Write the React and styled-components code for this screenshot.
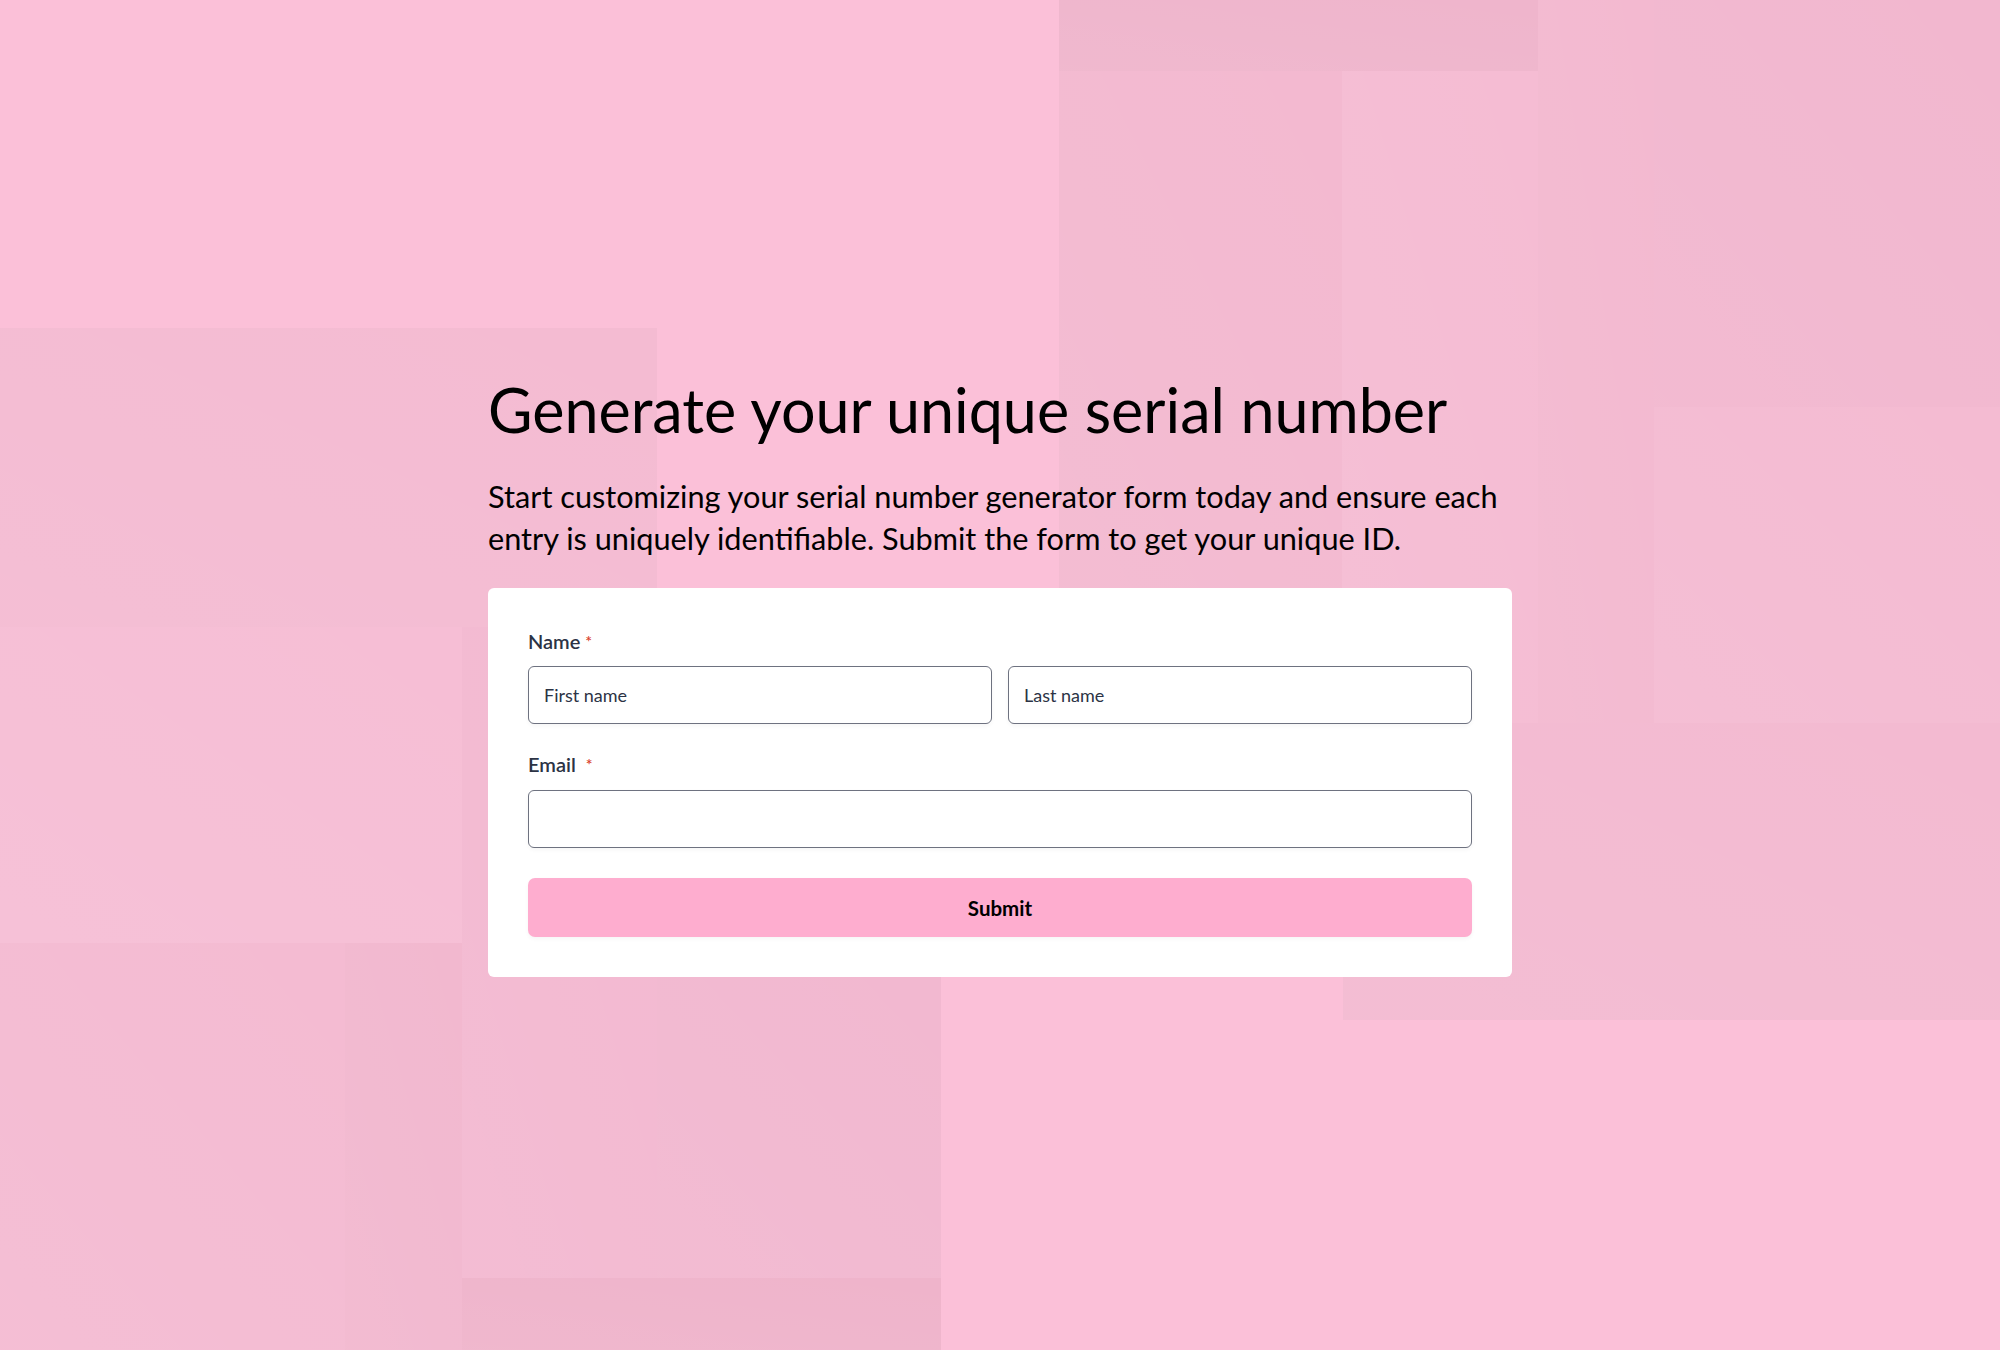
import styled, { createGlobalStyle } from "styled-components";

const GlobalStyle = createGlobalStyle`
  * { box-sizing: border-box; }
  html, body {
    margin: 0;
    padding: 0;
    background: #fbc0d8;
    font-family: Lato, "Open Sans", sans-serif;
  }
`;

// background blocks, [x, y, w, h, fill]
const blocks = [
  [1059, 0, 479, 71, "#efb5cc"],
  [1059, 71, 283, 560, "#f3b9d0"],
  [1342, 71, 196, 652, "#f5bcd3"],
  [1538, 0, 116, 723, "#f3b9d0"],
  [1654, 0, 346, 407, "#f2b7cf"],
  [1654, 407, 346, 316, "#f4bbd2"],
  [1343, 723, 657, 297, "#f3bad1"],
  [0, 328, 657, 299, "#f4bbd2"],
  [0, 627, 462, 316, "#f6bed5"],
  [462, 627, 195, 651, "#f3b9d1"],
  [0, 943, 345, 407, "#f4bbd2"],
  [345, 943, 117, 407, "#f2b8cf"],
  [657, 977, 284, 301, "#f2b8d0"],
  [462, 1278, 479, 72, "#efb4cb"],
];

const Page = () => (
  <Backdrop viewBox="0 0 2000 1350" preserveAspectRatio="none">
    <defs>
      <linearGradient id="shade" x1="0" y1="1" x2="1" y2="0">
        <stop offset="0" stopColor="#fff" stopOpacity="0.05" />
        <stop offset="1" stopColor="#fff" stopOpacity="0" />
      </linearGradient>
    </defs>
    {blocks.map(([x, y, w, h, fill], i) => (
      <g key={i}>
        <rect x={x} y={y} width={w} height={h} fill={fill} />
        <rect x={x} y={y} width={w} height={h} fill="url(#shade)" />
      </g>
    ))}
  </Backdrop>
);

const App = () => {
  return (
    <Wrapper>
      <GlobalStyle />
      <Page />
      <Content>
        <Title>Generate your unique serial number</Title>
        <Lead>
          Start customizing your serial number generator form today and ensure
          each entry is uniquely identifiable. Submit the form to get your
          unique ID.
        </Lead>
        <Card>
          <Field $gap={13}>
            <Label>
              Name<Required>*</Required>
            </Label>
            <Row>
              <Input placeholder="First name" />
              <Input placeholder="Last name" />
            </Row>
          </Field>
          <Field $gap={14}>
            <Label>
              Email <Required>*</Required>
            </Label>
            <Input type="email" />
          </Field>
          <SubmitButton type="button">Submit</SubmitButton>
        </Card>
      </Content>
    </Wrapper>
  );
};

export default App;

const Wrapper = styled.main`
  position: relative;
  min-height: 100vh;
  display: flex;
  align-items: center;
  justify-content: center;
  overflow: hidden;
`;

const Backdrop = styled.svg`
  position: absolute;
  inset: 0;
  width: 100%;
  height: 100%;
  z-index: 0;
`;

const Content = styled.div`
  position: relative;
  z-index: 1;
  width: 1024px;
  display: flex;
  flex-direction: column;
`;

const Title = styled.h1`
  margin: 0 0 30px;
  font-size: 61px;
  font-weight: 400;
  line-height: 1.2;
  color: #000;
`;

const Lead = styled.p`
  margin: 0 0 28px;
  font-size: 30.7px;
  line-height: 42px;
  color: #000;
`;

const Card = styled.form`
  background: #fff;
  border-radius: 6px;
  padding: 41px 40px 40px;
  display: flex;
  flex-direction: column;
`;

const Field = styled.div`
  display: flex;
  flex-direction: column;
  gap: ${(p) => p.$gap}px;
  margin-bottom: 28px;
`;

const Label = styled.label`
  font-size: 20px;
  line-height: 24px;
  font-weight: 600;
  color: #2c3345;
`;

const Required = styled.span`
  color: #d9412b;
  font-size: 16px;
  margin-left: 5px;
  vertical-align: 2px;
`;

const Row = styled.div`
  display: grid;
  grid-template-columns: 1fr 1fr;
  gap: 16px;
`;

const Input = styled.input`
  width: 100%;
  height: 58px;
  padding: 0 15px;
  font-family: Lato, "Open Sans", sans-serif;
  font-size: 18px;
  color: #2c3345;
  border: 1px solid #6e7280;
  border-radius: 6px;
  background: #fff;
  box-shadow: 0 2px 4px rgba(0, 0, 0, 0.04);
  outline: none;
  &::placeholder {
    color: #2c3345;
    opacity: 1;
  }
`;

const SubmitButton = styled.button`
  height: 59px;
  width: 100%;
  margin-top: 2px;
  border: none;
  border-radius: 7px;
  background: #feadcf;
  color: #000;
  font-family: Lato, "Open Sans", sans-serif;
  font-size: 20.5px;
  font-weight: 700;
  cursor: pointer;
  box-shadow: 0 2px 4px rgba(0, 0, 0, 0.04);
`;
